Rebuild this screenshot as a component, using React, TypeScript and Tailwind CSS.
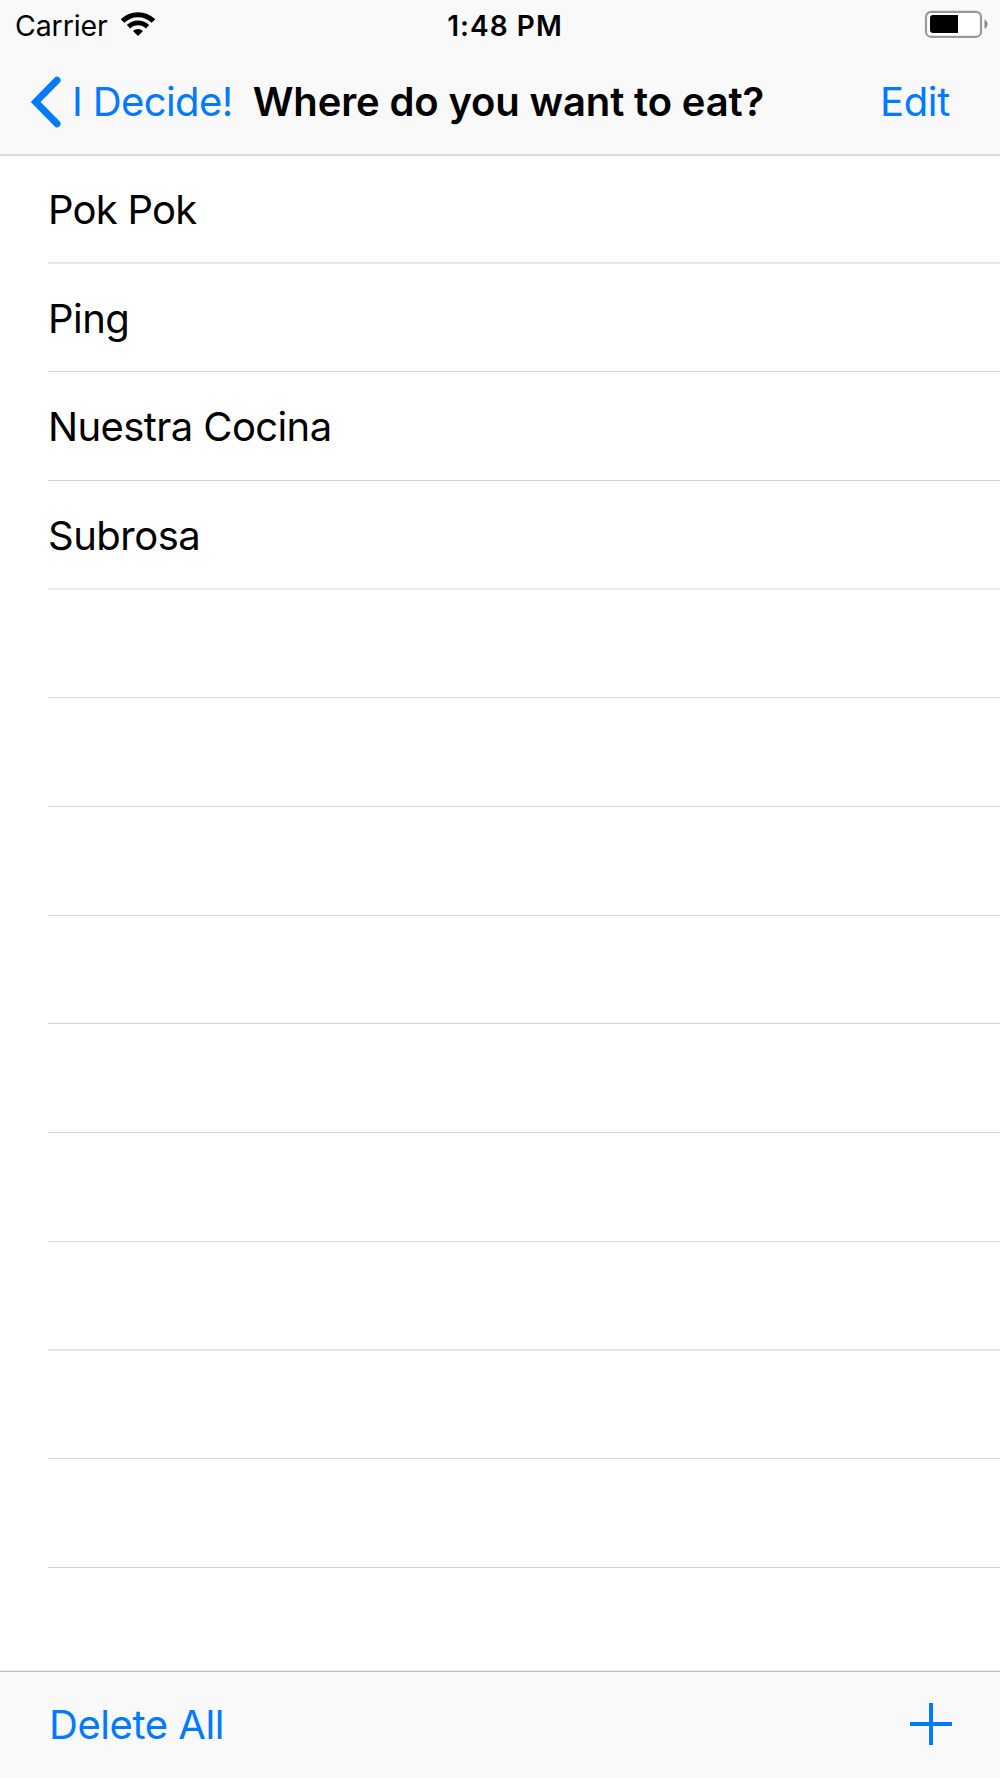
import clsx from "clsx";

const rows = [
  { name: "Pok Pok", className: "h-[108px] border-b-2 border-[#e8e8e9] tracking-[-0.75px]" },
  { name: "Ping", className: "h-[108px] border-b border-[#d2d2d4] tracking-[-0.5px]" },
  { name: "Nuestra Cocina", className: "h-[109px] border-b border-[#d2d2d4] tracking-[-0.6px]" },
  { name: "Subrosa", className: "h-[109px] border-b-2 border-[#e8e8e9] tracking-[-0.5px]" },
  { name: "", className: "h-[108px] border-b border-[#d6d6d8]" },
  { name: "", className: "h-[109px] border-b border-[#d2d2d4]" },
  { name: "", className: "h-[109px] border-b border-[#d6d6d8]" },
  { name: "", className: "h-[108px] border-b border-[#d6d6d8]" },
  { name: "", className: "h-[109px] border-b border-[#d2d2d4]" },
  { name: "", className: "h-[109px] border-b border-[#d6d6d8]" },
  { name: "", className: "h-[109px] border-b-2 border-[#e8e8e9]" },
  { name: "", className: "h-[108px] border-b border-[#d2d2d4]" },
  { name: "", className: "h-[109px] border-b border-[#d2d2d4]" },
];

function StatusBar() {
  return (
    <div className="grid h-[50px] grid-cols-3 items-center pr-[12px] pl-[15px]">
      <div className="flex items-center gap-[13px]">
        <span className="pt-[2px] text-[28.5px] leading-none tracking-[-0.1px]">Carrier</span>
        <svg width="34" height="24" viewBox="0 0 34 24" fill="none" className="-mt-[2px]">
          <path d="M1.6 9a21.8 21.8 0 0 1 30.8 0" stroke="#000" strokeWidth="5" />
          <path d="M7.5 14.8a13.6 13.6 0 0 1 19 0" stroke="#000" strokeWidth="4.8" />
          <path d="M17 24l-5-5a7.2 7.2 0 0 1 10 0z" fill="#000" />
        </svg>
      </div>
      <span className="pt-px pl-[7px] text-center text-[28px] leading-none font-semibold tracking-[1.05px]">
        1:48 PM
      </span>
      <div className="flex justify-end">
        <svg width="64" height="28" viewBox="0 0 64 28" fill="none" className="-mt-[2px]">
          <rect x="2" y="1.8" width="55" height="25" rx="5" fill="#fff" stroke="#999" strokeWidth="2.2" />
          <path d="M9 5h25v18H9a3 3 0 0 1-3-3V8a3 3 0 0 1 3-3z" fill="#000" />
          <path d="M60.5 9.5c4 2 4 7.5 0 9.5z" fill="#888" />
        </svg>
      </div>
    </div>
  );
}

function NavBar() {
  return (
    <div className="flex h-[104px] items-center pr-[50px] pl-[31px] text-[40px] leading-none">
      <button className="flex items-center text-[#007aff]">
        <svg width="30" height="52" viewBox="0 0 30 52" fill="none">
          <path d="M26 4.3L4.6 26 26 47.7" stroke="currentColor" strokeWidth="7" strokeLinecap="round" />
        </svg>
        <span className="ml-[11px] tracking-[-0.6px]">I Decide!</span>
      </button>
      <h1 className="ml-[20px] font-semibold tracking-[-0.14px]">Where do you want to eat?</h1>
      <button className="ml-auto tracking-[-0.3px] text-[#007aff]">Edit</button>
    </div>
  );
}

export default function App() {
  return (
    <div className="flex h-[1778px] w-[1000px] flex-col overflow-hidden bg-white font-['Inter',sans-serif] whitespace-nowrap text-black">
      <header className="h-[156px] shrink-0 border-b-2 border-[#dcdcdd] bg-[#f9f9f9]">
        <StatusBar />
        <NavBar />
      </header>
      <ul className="flex-1 pl-[48px]">
        {rows.map((row, i) => (
          <li key={i} className={clsx("flex items-center pt-[2px] text-[40px] leading-none", row.className)}>
            {row.name}
          </li>
        ))}
      </ul>
      <footer className="flex h-[107px] shrink-0 items-center justify-between border-t border-[#bfbfc1] bg-[#f9f9f9] pr-[48px] pl-[49px] text-[#007aff] shadow-[0_-1px_0_#ebebeb]">
        <button className="text-[40px] leading-none tracking-[-0.45px]">Delete All</button>
        <svg width="42" height="42" viewBox="0 0 42 42" className="-mt-[3px]">
          <path d="M21 0v42M0 21h42" stroke="currentColor" strokeWidth="4" />
        </svg>
      </footer>
    </div>
  );
}
